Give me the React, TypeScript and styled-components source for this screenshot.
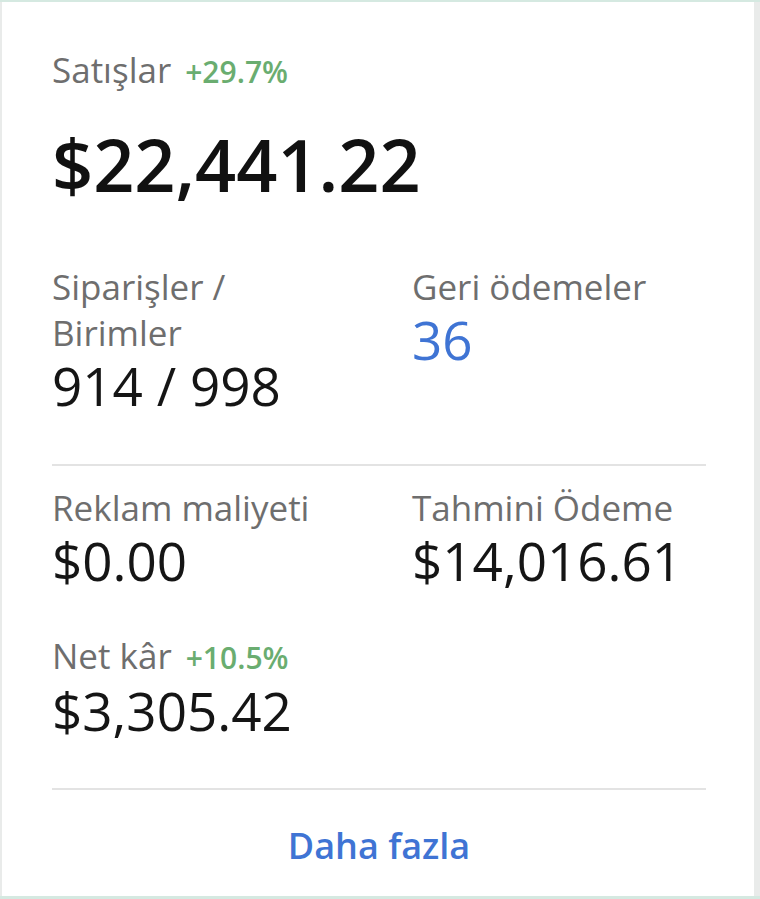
import styled, { createGlobalStyle } from "styled-components";

const GlobalStyle = createGlobalStyle`
  html, body {
    margin: 0;
    padding: 0;
    background: #e9ebea;
  }
  body {
    font-family: "Open Sans", "Noto Sans", sans-serif;
  }
`;

const Page = styled.div`
  width: 760px;
  height: 899px;
  box-sizing: border-box;
  padding: 2px 6px 3px 2px;
  background: #e9ebea;
  display: flex;
  flex-direction: column;
  position: relative;

  &::before,
  &::after {
    content: "";
    position: absolute;
    left: 0;
    right: 0;
    background: #d5e9e1;
  }
  &::before {
    top: 0;
    height: 2px;
  }
  &::after {
    bottom: 0;
    height: 3px;
  }
`;

const Card = styled.div`
  flex: 1;
  background: #fff;
  padding: 45px 48px 0 50px;
  display: flex;
  flex-direction: column;
`;

const Label = styled.div<{ $stacked?: boolean }>`
  font-size: 35px;
  line-height: 46px;
  color: #6e6e6e;
  display: flex;
  flex-direction: ${(p) => (p.$stacked ? "column" : "row")};
  align-items: ${(p) => (p.$stacked ? "flex-start" : "baseline")};
  gap: ${(p) => (p.$stacked ? "0" : "14px")};
  white-space: nowrap;
`;

const Change = styled.span`
  font-size: 30px;
  font-weight: 600;
  color: #6aad70;
`;

const Headline = styled.div`
  margin-top: 28px;
  font-size: 72px;
  line-height: 82px;
  font-weight: 600;
  color: #111;
`;

const Grid = styled.div<{ $top: number }>`
  display: grid;
  grid-template-columns: 360px 1fr;
  row-gap: 42px;
  margin-top: ${(p) => p.$top}px;
`;

const Metric = styled.div`
  display: flex;
  flex-direction: column;
`;

const Value = styled.div<{ $link?: boolean }>`
  font-size: 53px;
  line-height: 60px;
  color: ${(p) => (p.$link ? "#3f74d4" : "#151515")};
`;

const Divider = styled.hr<{ $top: number }>`
  border: 0;
  height: 2px;
  background: #e3e3e3;
  margin: ${(p) => p.$top}px 0 0;
`;

const More = styled.button`
  align-self: center;
  margin-top: 33px;
  background: none;
  border: 0;
  padding: 0;
  font-family: inherit;
  font-size: 36px;
  line-height: 46px;
  font-weight: 600;
  color: #3f74d4;
  cursor: pointer;
`;

export default function App() {
  return (
    <>
      <GlobalStyle />
      <Page>
        <Card>
          <Label>
            Satışlar <Change>+29.7%</Change>
          </Label>
          <Headline>$22,441.22</Headline>

          <Grid $top={59}>
            <Metric>
              <Label $stacked>
                <span>Siparişler /</span>
                <span>Birimler</span>
              </Label>
              <Value>914 / 998</Value>
            </Metric>
            <Metric>
              <Label>Geri ödemeler</Label>
              <Value $link>36</Value>
            </Metric>
          </Grid>

          <Divider $top={48} />

          <Grid $top={19}>
            <Metric>
              <Label>Reklam maliyeti</Label>
              <Value>$0.00</Value>
            </Metric>
            <Metric>
              <Label>Tahmini Ödeme</Label>
              <Value>$14,016.61</Value>
            </Metric>
            <Metric>
              <Label>
                Net kâr <Change>+10.5%</Change>
              </Label>
              <Value>$3,305.42</Value>
            </Metric>
          </Grid>

          <Divider $top={47} />

          <More>Daha fazla</More>
        </Card>
      </Page>
    </>
  );
}
